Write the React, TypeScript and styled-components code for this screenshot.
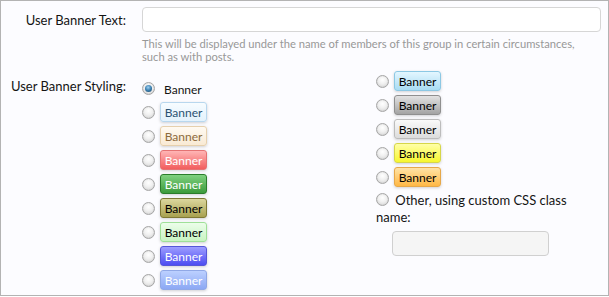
import React from "react"
import styled, { createGlobalStyle } from "styled-components"

const GlobalStyle = createGlobalStyle`
  html, body {
    margin: 0;
    padding: 0;
    background: #ffffff;
  }
  body {
    font-family: "Lato", "Liberation Sans", sans-serif;
  }
`

interface BannerTone {
  top: string
  bottom: string
  border: string
  text: string
}

const tones: Record<string, BannerTone> = {
  primary: { top: "#f7fcff", bottom: "#e3f2fc", border: "#b8d7ee", text: "#2b5272" },
  secondary: { top: "#fffaf2", bottom: "#f9ead4", border: "#e6d0ad", text: "#8c6a3c" },
  red: { top: "#ffb5b5", bottom: "#f25d5d", border: "#e47373", text: "#ffffff" },
  green: { top: "#7fd17f", bottom: "#3c9b3c", border: "#2b7d2b", text: "#ffffff" },
  olive: { top: "#dcd79e", bottom: "#a8a150", border: "#807a35", text: "#000000" },
  lightGreen: { top: "#ecfdea", bottom: "#c8f4c2", border: "#9fe098", text: "#000000" },
  blue: { top: "#9d9dff", bottom: "#4d4df2", border: "#5656d8", text: "#ffffff" },
  royal: { top: "#bcd0ff", bottom: "#8ca8f4", border: "#90a8e6", text: "#ffffff" },
  sky: { top: "#e3f6ff", bottom: "#a9dcf3", border: "#8cc8e4", text: "#000000" },
  gray: { top: "#e2e2e2", bottom: "#a3a3a3", border: "#8f8f8f", text: "#000000" },
  silver: { top: "#fafafa", bottom: "#dcdcdc", border: "#bcbcbc", text: "#000000" },
  yellow: { top: "#ffffa8", bottom: "#f7f72f", border: "#d6d64a", text: "#000000" },
  orange: { top: "#ffe3a6", bottom: "#ffb845", border: "#e6a84a", text: "#000000" },
}

const Frame = styled.div`
  box-sizing: border-box;
  width: 609px;
  height: 296px;
  border: 1px solid #b3b3b3;
  background: #fcfcff;
  padding: 6px 7px 0 0;
  display: grid;
  grid-template-columns: 125px 1fr;
  column-gap: 16px;
  align-content: start;
  color: #141414;
`

const Label = styled.div<{ $top: number }>`
  text-align: right;
  font-size: 13px;
  line-height: 16px;
  padding-top: ${(p) => p.$top}px;
  white-space: nowrap;
`

const Field = styled.div`
  display: flex;
  flex-direction: column;
`

const TextBox = styled.input<{ $muted?: boolean }>`
  box-sizing: border-box;
  height: 25px;
  width: ${(p) => (p.$muted ? "157px" : "100%")};
  border: 1px solid ${(p) => (p.$muted ? "#d0d0d0" : "#d6d6d6")};
  border-radius: 4px;
  background: ${(p) => (p.$muted ? "#f5f5f5" : "#ffffff")};
  outline: none;
  margin: 0;
`

const Hint = styled.p`
  margin: 5px 0 0;
  font-size: 11.2px;
  line-height: 13px;
  color: #989898;
`

const Columns = styled.div`
  margin-top: 8px;
  display: grid;
  grid-template-columns: 234px 215px;
  align-items: start;
`

const OptionList = styled.ul<{ $offset: number }>`
  list-style: none;
  margin: 0;
  padding: ${(p) => p.$offset}px 0 0 0;
  display: flex;
  flex-direction: column;
  gap: 4px;
`

const Option = styled.li`
  display: flex;
  align-items: center;
  gap: 5px;
  height: 20px;
`

const Radio = styled.span<{ $checked?: boolean }>`
  box-sizing: border-box;
  flex: none;
  width: 13px;
  height: 13px;
  border-radius: 50%;
  border: 1px solid #a6a6a6;
  background: radial-gradient(circle at 50% 35%, #ffffff 0%, #f0f0f0 45%, #cfcfcf 100%);
  box-shadow: inset 0 0 1px rgba(0, 0, 0, 0.15);
  display: inline-flex;
  align-items: center;
  justify-content: center;
  &::after {
    content: "";
    display: ${(p) => (p.$checked ? "block" : "none")};
    width: 7px;
    height: 7px;
    border-radius: 50%;
    background: radial-gradient(circle at 45% 35%, #9fd0f0 0%, #3a7fb0 50%, #163f5e 100%);
  }
`

const PlainText = styled.span`
  font-size: 12px;
  margin-left: 4px;
  padding-top: 2px;
`

const Banner = styled.span<{ $tone: BannerTone }>`
  box-sizing: border-box;
  width: 47px;
  height: 20px;
  display: inline-flex;
  align-items: center;
  justify-content: center;
  font-size: 12px;
  border-radius: 3px;
  color: ${(p) => p.$tone.text};
  border: 1px solid ${(p) => p.$tone.border};
  background: linear-gradient(to bottom, ${(p) => p.$tone.top}, ${(p) => p.$tone.bottom});
  box-shadow: 0 1px 3px rgba(0, 0, 0, 0.18);
`

const OtherOption = styled.li`
  font-size: 13px;
  line-height: 17px;
  margin-top: 1px;
  & > span:first-child {
    vertical-align: -1px;
    margin-right: 3px;
  }
`

const CustomInput = styled.div`
  padding: 5px 0 0 16px;
`

const leftTones = ["primary", "secondary", "red", "green", "olive", "lightGreen", "blue", "royal"]
const rightTones = ["sky", "gray", "silver", "yellow", "orange"]

const App: React.FC = () => {
  return (
    <>
      <GlobalStyle />
      <Frame>
        <Label $top={5}>User Banner Text:</Label>
        <Field>
          <TextBox type="text" />
          <Hint>
            This will be displayed under the name of members of this group in certain circumstances,
            <br />
            such as with posts.
          </Hint>
        </Field>

        <Label $top={15}>User Banner Styling:</Label>
        <Columns>
          <OptionList $offset={7}>
            <Option>
              <Radio $checked />
              <PlainText>Banner</PlainText>
            </Option>
            {leftTones.map((t) => (
              <Option key={t}>
                <Radio />
                <Banner $tone={tones[t]}>Banner</Banner>
              </Option>
            ))}
          </OptionList>
          <OptionList $offset={0}>
            {rightTones.map((t) => (
              <Option key={t}>
                <Radio />
                <Banner $tone={tones[t]}>Banner</Banner>
              </Option>
            ))}
            <OtherOption>
              <Radio /> Other, using custom CSS class name:
              <CustomInput>
                <TextBox type="text" $muted />
              </CustomInput>
            </OtherOption>
          </OptionList>
        </Columns>
      </Frame>
    </>
  )
}

export default App
